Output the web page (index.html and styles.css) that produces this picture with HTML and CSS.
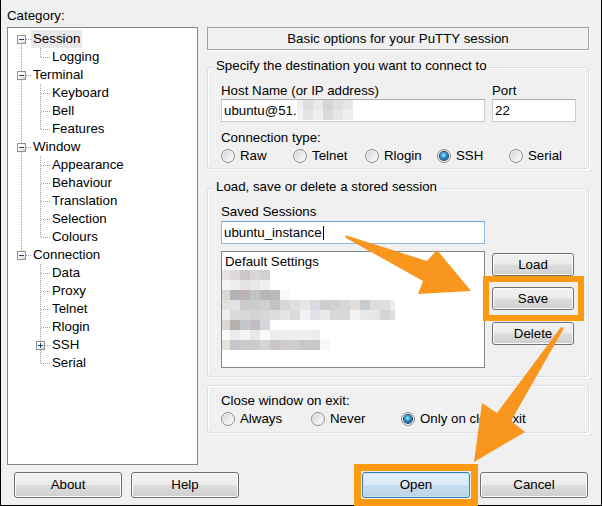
FILE: index.html
```html
<!DOCTYPE html>
<html>
<head>
<meta charset="utf-8">
<title>PuTTY Configuration</title>
<link rel="stylesheet" href="styles.css">
</head>
<body>
<div class="win">
  <div class="main">
    <div class="left">
      <div class="cat-label">Category:</div>
      <div class="tree">
        <div class="row"><span class="ca first"><span class="exp"></span></span><span class="lbl sel">Session</span></div>
        <div class="row"><span class="ca v"></span><span class="cb last"></span><span class="lbl">Logging</span></div>
        <div class="row"><span class="ca mid"><span class="exp"></span></span><span class="lbl">Terminal</span></div>
        <div class="row"><span class="ca v"></span><span class="cb"></span><span class="lbl">Keyboard</span></div>
        <div class="row"><span class="ca v"></span><span class="cb"></span><span class="lbl">Bell</span></div>
        <div class="row"><span class="ca v"></span><span class="cb last"></span><span class="lbl">Features</span></div>
        <div class="row"><span class="ca mid"><span class="exp"></span></span><span class="lbl">Window</span></div>
        <div class="row"><span class="ca v"></span><span class="cb"></span><span class="lbl">Appearance</span></div>
        <div class="row"><span class="ca v"></span><span class="cb"></span><span class="lbl">Behaviour</span></div>
        <div class="row"><span class="ca v"></span><span class="cb"></span><span class="lbl">Translation</span></div>
        <div class="row"><span class="ca v"></span><span class="cb"></span><span class="lbl">Selection</span></div>
        <div class="row"><span class="ca v"></span><span class="cb last"></span><span class="lbl">Colours</span></div>
        <div class="row"><span class="ca end"><span class="exp"></span></span><span class="lbl">Connection</span></div>
        <div class="row"><span class="ca"></span><span class="cb"></span><span class="lbl">Data</span></div>
        <div class="row"><span class="ca"></span><span class="cb"></span><span class="lbl">Proxy</span></div>
        <div class="row"><span class="ca"></span><span class="cb"></span><span class="lbl">Telnet</span></div>
        <div class="row"><span class="ca"></span><span class="cb"></span><span class="lbl">Rlogin</span></div>
        <div class="row"><span class="ca"></span><span class="cb node"><span class="exp plus"></span></span><span class="lbl">SSH</span></div>
        <div class="row"><span class="ca"></span><span class="cb last"></span><span class="lbl">Serial</span></div>
      </div>
    </div>

    <div class="right">
      <div class="header">Basic options for your PuTTY session</div>

      <div class="group g1">
        <div class="legend">Specify the destination you want to connect to</div>
        <div class="hostrow">
          <div class="field host">
            <div class="flabel">Host Name (or IP address)</div>
            <div class="input">ubuntu@51.<span class="pix-host"></span></div>
          </div>
          <div class="field port">
            <div class="flabel">Port</div>
            <div class="input">22</div>
          </div>
        </div>
        <div class="flabel ct">Connection type:</div>
        <div class="radios five">
          <div class="radio"><span class="rb"></span>Raw</div>
          <div class="radio"><span class="rb"></span>Telnet</div>
          <div class="radio"><span class="rb"></span>Rlogin</div>
          <div class="radio"><span class="rb on"></span>SSH</div>
          <div class="radio"><span class="rb"></span>Serial</div>
        </div>
      </div>

      <div class="group g2">
        <div class="legend">Load, save or delete a stored session</div>
        <div class="flabel ss">Saved Sessions</div>
        <div class="sessrow">
          <div class="sesscol">
            <div class="input focus">ubuntu_instance<span class="caret"></span></div>
            <div class="list">
              <div class="item">Default Settings</div>
              <div class="pix">
                <div class="pr pr1"></div>
                <div class="pr pr2"></div>
                <div class="pr pr3"></div>
                <div class="pr pr4"></div>
                <div class="pr pr5"></div>
                <div class="pr pr6"></div>
                <div class="pr pr7"></div>
                <div class="pr pr8"></div>
              </div>
            </div>
          </div>
          <div class="btncol">
            <div class="btn small">Load</div>
            <div class="btn small save">Save</div>
            <div class="btn small del">Delete</div>
          </div>
        </div>
      </div>

      <div class="group g3">
        <div class="flabel">Close window on exit:</div>
        <div class="radios three">
          <div class="radio"><span class="rb"></span>Always</div>
          <div class="radio"><span class="rb"></span>Never</div>
          <div class="radio"><span class="rb on"></span>Only on clean exit</div>
        </div>
      </div>
    </div>
  </div>

  <div class="bottom">
    <div class="btns">
      <div class="btn">About</div>
      <div class="btn">Help</div>
    </div>
    <div class="btns r">
      <div class="btn def">Open</div>
      <div class="btn">Cancel</div>
    </div>
  </div>
</div>

<svg class="overlay" width="602" height="506" viewBox="0 0 602 506" xmlns="http://www.w3.org/2000/svg">
  <g fill="#f8961e">
    <polygon points="345,235 427,261 437,250 471,291 418,294 423,281 346,238"/>
    <polygon points="564,328 511,421 525,432 474,462 482,403 497,413 561,327"/>
  </g>
  <g fill="none" stroke="#fb9a10">
    <rect x="486" y="279" width="95" height="39" stroke-width="6"/>
    <rect x="357.5" y="467.5" width="117" height="35" stroke-width="7"/>
  </g>
</svg>
</body>
</html>
```

FILE: styles.css
```css
* { box-sizing: border-box; margin: 0; padding: 0; }

:root {
  --dv: repeating-linear-gradient(to bottom, #a0a0a0 0 1px, transparent 1px 2px);
  --dh: repeating-linear-gradient(to right, #a0a0a0 0 1px, transparent 1px 2px);
}

html, body {
  width: 602px;
  height: 506px;
  overflow: hidden;
  background: #f0f0f0;
}

body {
  font-family: "Liberation Sans", Arial, sans-serif;
  font-size: 13.3px;
  color: #000;
}

.win {
  width: 602px;
  height: 506px;
  border: 1px solid #000;
  border-top: 0;
  background: #f0f0f0;
  display: flex;
  flex-direction: column;
}

.main {
  display: flex;
  padding: 8px 0 0 6px;
}

/* ---------- left tree ---------- */
.left {
  width: 191px;
  display: flex;
  flex-direction: column;
}

.cat-label { line-height: 15px; height: 15px; }

.tree {
  margin-top: 4px;
  height: 438px;
  border: 1px solid #828790;
  background: #fff;
  padding-top: 2px;
}

.row {
  display: flex;
  height: 18px;
  line-height: 18px;
}

.ca, .cb {
  flex: none;
  height: 18px;
  display: flex;
  align-items: center;
}
.ca { width: 23px; }
.cb { width: 19px; }

.ca.v { background: var(--dv) 13px 0 / 1px 18px no-repeat; }
.ca.first { background: var(--dv) 13px 9px / 1px 9px no-repeat, var(--dh) 18px 9px / 5px 1px no-repeat; }
.ca.mid { background: var(--dv) 13px 0 / 1px 18px no-repeat, var(--dh) 18px 9px / 5px 1px no-repeat; }
.ca.end { background: var(--dv) 13px 0 / 1px 9px no-repeat, var(--dh) 18px 9px / 5px 1px no-repeat; }

.cb { background: var(--dv) 9px 0 / 1px 18px no-repeat, var(--dh) 10px 9px / 9px 1px no-repeat; }
.cb.last { background: var(--dv) 9px 0 / 1px 9px no-repeat, var(--dh) 10px 9px / 9px 1px no-repeat; }
.cb.node { background: var(--dv) 9px 0 / 1px 18px no-repeat, var(--dh) 14px 9px / 5px 1px no-repeat; }

.exp {
  width: 9px;
  height: 9px;
  margin-left: 9px;
  border: 1px solid #919191;
  background: linear-gradient(135deg, #ffffff 30%, #d8d8d8);
  display: grid;
  place-items: center;
}
.cb .exp { margin-left: 5px; }
.exp::before, .exp::after {
  content: "";
  grid-area: 1 / 1;
  background: #22407c;
}
.exp::before { width: 5px; height: 1px; }
.exp.plus::after { width: 1px; height: 5px; }

.lbl { padding: 0 2px; white-space: nowrap; }
.lbl.sel { background: #e8e8e8; }

/* ---------- right panel ---------- */
.right {
  width: 382px;
  margin-left: 9px;
  padding-top: 19px;
  display: flex;
  flex-direction: column;
}

.header {
  height: 23px;
  border: 1px solid #a0a0a0;
  box-shadow: 1px 1px 0 #fff;
  text-align: center;
  line-height: 20px;
  padding-top: 1px;
}

.group {
  border: 1px solid #d5dfe5;
  border-radius: 3px;
  box-shadow: inset 1px 1px 0 #fff, 1px 1px 0 #fff;
  padding: 0 0 0 13px;
  display: flex;
  flex-direction: column;
}
.g1 { margin-top: 17px; padding-bottom: 5px; }
.g2 { margin-top: 19px; padding-bottom: 8px; }
.g3 { margin-top: 8px; padding-top: 7px; padding-bottom: 6px; }

.legend {
  align-self: flex-start;
  margin: -10px 0 0 -6px;
  padding: 0 1px;
  background: #f0f0f0;
  line-height: 15px;
  white-space: nowrap;
}

.flabel { line-height: 15px; white-space: nowrap; }

.hostrow { display: flex; gap: 7px; margin-top: 10px; }
.field.host { width: 264px; }
.field.port { width: 84px; }

.input {
  height: 23px;
  border: 1px solid #c6ccd4;
  border-top-color: #abadb3;
  background: #fff;
  padding-left: 2px;
  line-height: 21px;
  display: flex;
  white-space: nowrap;
}
.field .input { margin-top: 1px; }
.input.focus { border-color: #8fb8e2; border-top-color: #6fa1d6; }

.pix-host {
  width: 56px;
  height: 20px;
  background:
    linear-gradient(to right, #eff0f1 0 6px, #dcdde1 6px 16px, #e9e9e9 16px 26px, #d5d5d3 26px 36px, #dfdfdf 36px 46px, #e4e6e9 46px 56px) 0 0 / 56px 10px no-repeat,
    linear-gradient(to right, #f3f3f3 0 6px, #e3e5e7 6px 16px, #eeeeee 16px 26px, #d9d9d9 26px 36px, #e6e6e6 36px 46px, #eeeff0 46px 56px) 0 10px / 56px 10px no-repeat;
}

.caret {
  width: 1px;
  height: 14px;
  background: #000;
  margin: 4px 0 0 1px;
}

.ct { margin-top: 8px; }

.radios {
  display: grid;
  margin-top: 3px;
  line-height: 15px;
}
.radios.five { grid-template-columns: repeat(5, 72px); }
.radios.three { grid-template-columns: repeat(3, 90px); }

.radio {
  display: flex;
  align-items: center;
  gap: 5px;
  white-space: nowrap;
}

.rb {
  flex: none;
  width: 14px;
  height: 14px;
  border-radius: 50%;
  border: 1px solid #8e8f8f;
  background: linear-gradient(135deg, #cfcfcf, #f6f6f6 75%, #ffffff);
  box-shadow: inset 0 0 0 1px #f2f2f2;
  display: grid;
  place-items: center;
}
.rb.on::before {
  content: "";
  width: 8px;
  height: 8px;
  border-radius: 50%;
  background: radial-gradient(circle at 45% 40%, #b9ecff 0, #3aa0e0 35%, #0f4f8c 75%, #0a2e55);
  box-shadow: 0 0 0 1px #1a3d66;
}

.ss { margin-top: 10px; }

.sessrow { display: flex; gap: 7px; margin-top: 2px; }
.sesscol { width: 264px; display: flex; flex-direction: column; }

.list {
  margin-top: 7px;
  height: 117px;
  border: 1px solid #828790;
  background: #fff;
  padding-top: 2px;
}
.item { line-height: 15px; padding-left: 3px; }
.pix { margin-top: 1px; display: flex; flex-direction: column; }
.pr { height: 10px; }
.pr1 { width: 48px; background: linear-gradient(to right, #e8e4e4 0 8px, #dcdadc 8px 18px, #ccc8ca 18px 28px, #d8d6d6 28px 38px, #d2d0d2 38px 48px); }
.pr2 { width: 48px; background: linear-gradient(to right, #f4f2f2 0 8px, #eceef0 8px 18px, #e4e2e2 18px 28px, #e8e8ea 28px 38px, #f0f0f2 38px 48px); }
.pr3 { width: 68px; background: linear-gradient(to right, #dcd8d6 0 8px, #b4b2b6 8px 18px, #bcb4b4 18px 28px, #c0c4c4 28px 38px, #b8b6b8 38px 48px, #bababa 48px 58px, #f8fafa 58px 68px); }
.pr4 { width: 173px; background: linear-gradient(to right, #e4e0de 0 8px, #e0e2e6 8px 18px, #cccaca 18px 28px, #cccccc 28px 38px, #d0cece 38px 48px, #c4c2c4 48px 58px, #d4d6da 58px 68px, #e0dede 68px 78px, #e8e6e2 78px 88px, #d8dce2 88px 98px, #cecece 98px 108px, #d2d0d0 108px 118px, #d8d8d8 118px 128px, #e2dede 128px 138px, #c8ccd2 138px 148px, #dcdcdc 148px 158px, #e0dede 158px 168px, #eceef2 168px 173px); }
.pr5 { width: 173px; background: linear-gradient(to right, #f0eeee 0 8px, #dcdadc 8px 18px, #d8d8d8 18px 28px, #d4d4d6 28px 38px, #d8d8d8 38px 48px, #dcdcdc 48px 58px, #e2e4e6 58px 68px, #dcd8d8 68px 78px, #f2f2f2 78px 88px, #dfe2e6 88px 98px, #eaeaea 98px 108px, #dad8d6 108px 118px, #d6d8dc 118px 128px, #f6f4f2 128px 138px, #e6e8ec 138px 148px, #e6e6e6 148px 158px, #d8d4d6 158px 168px, #dcdee2 168px 173px); }
.pr6 { width: 48px; background: linear-gradient(to right, #dcd6d4 0 8px, #b8b0b0 8px 18px, #c4c8cc 18px 28px, #c0bcc0 28px 38px, #d4d6dc 38px 48px); }
.pr7 { width: 98px; background: linear-gradient(to right, #fafaf8 0 8px, #ecebee 8px 18px, #f4f4f4 18px 28px, #e8e8ea 28px 38px, #fafafa 38px 48px, #eeeef0 48px 58px, #f0eeec 58px 68px, #eeeff0 68px 78px, #f0f0f0 78px 88px, #eceeee 88px 98px); }
.pr8 { width: 108px; background: linear-gradient(to right, #e0e0dc 0 8px, #c8c4cc 8px 18px, #ccc8cc 18px 28px, #cccaca 28px 38px, #d4d4d4 38px 48px, #ccc4c8 48px 58px, #cccccc 58px 68px, #ccd0d0 68px 78px, #ccc6cc 78px 88px, #c8c8ca 88px 98px, #f8f8fa 98px 108px); }

.btncol {
  width: 82px;
  padding-top: 32px;
  display: flex;
  flex-direction: column;
}

/* ---------- buttons ---------- */
.btn {
  height: 26px;
  width: 108px;
  border: 1px solid #707070;
  border-radius: 3px;
  background: linear-gradient(#f2f2f2 0, #ebebeb 48%, #dddddd 52%, #cfcfcf 100%);
  box-shadow: inset 0 0 0 1px #fbfbfb;
  text-align: center;
  line-height: 24px;
}
.btn.small { width: 82px; height: 23px; line-height: 22px; }
.btn.save { margin-top: 11px; }
.btn.del { margin-top: 12px; }

.btn.def {
  border-color: #3c7fb1;
  background: linear-gradient(#e6f1fa 0, #dbeaf6 48%, #c9ddee 52%, #bcd4e8 100%);
  box-shadow: inset 0 0 0 1px #c4e6fb;
}

.bottom {
  margin-top: 7px;
  padding: 0 13px;
  display: flex;
  justify-content: space-between;
}
.btns { display: flex; gap: 9px; }
.btns.r { gap: 10px; }

/* ---------- annotations ---------- */
.overlay {
  position: absolute;
  left: 0;
  top: 0;
  pointer-events: none;
}
```
